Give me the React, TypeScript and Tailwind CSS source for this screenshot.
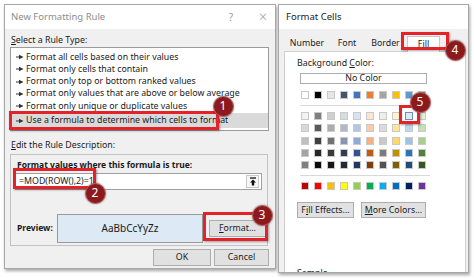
import React from "react";

const theme = ["#FFFFFF", "#000000", "#E7E6E6", "#44546A", "#4472C4", "#ED7D31", "#A5A5A5", "#FFC000", "#5B9BD5", "#70AD47"];
const shades = [
  ["#F2F2F2", "#7F7F7F", "#D0CECE", "#D6DCE4", "#D9E2F3", "#FBE5D5", "#EDEDED", "#FFF2CC", "#DEEBF6", "#E2EFD9"],
  ["#D8D8D8", "#595959", "#AEABAB", "#ADB9CA", "#B4C6E7", "#F7CBAC", "#DBDBDB", "#FEE599", "#BDD7EE", "#C5E0B3"],
  ["#BFBFBF", "#3F3F3F", "#757070", "#8496B0", "#8EAADB", "#F4B183", "#C9C9C9", "#FFD965", "#9DC3E6", "#A8D08D"],
  ["#A5A5A5", "#262626", "#3A3838", "#323F4F", "#2F5496", "#C55A11", "#7B7B7B", "#BF9000", "#2E75B5", "#538135"],
  ["#7F7F7F", "#0C0C0C", "#171616", "#222A35", "#1F3864", "#833C0B", "#525252", "#7F6000", "#1E4E79", "#375623"],
];
const standard = ["#C00000", "#FF0000", "#FFC000", "#FFFF00", "#92D050", "#00B050", "#00B0F0", "#0070C0", "#002060", "#7030A0"];

const rules = [
  "Format all cells based on their values",
  "Format only cells that contain",
  "Format only top or bottom ranked values",
  "Format only values that are above or below average",
  "Format only unique or duplicate values",
];

function Arrow() {
  return (
    <svg width="8" height="6" viewBox="0 0 8 6" className="shrink-0">
      <line x1="0" y1="3" x2="4" y2="3" stroke="#333" strokeWidth="1" />
      <polygon points="3,0.8 7.5,3 3,5.2" fill="#333" />
    </svg>
  );
}

function Badge({ n, x, y }: { n: string; x: number; y: number }) {
  return (
    <div
      className="absolute w-[21px] h-[21px] rounded-full bg-[#8c1a1c] border border-[#b86a6a] flex items-center justify-center text-white text-[12px] leading-none font-['Noto_Sans',sans-serif] shadow-[0_0_2px_rgba(0,0,0,0.4)]"
      style={{ left: x - 10.5, top: y - 10.5 }}
    >
      {n}
    </div>
  );
}

function RedBox({ x, y, w, h }: { x: number; y: number; w: number; h: number }) {
  return (
    <div
      className="absolute border-[3px] border-[#e3222a] shadow-[1px_1px_2px_rgba(0,0,0,0.35)]"
      style={{ left: x, top: y, width: w, height: h }}
    />
  );
}

function Swatch({ c, sel }: { c: string; sel?: boolean }) {
  return (
    <div
      className={
        sel
          ? "w-[8px] h-[8px] border border-[#6d8fb5]"
          : "w-[8px] h-[8px] border border-[#c9c9c9]"
      }
      style={{ backgroundColor: c }}
    />
  );
}

export default function App() {
  return (
    <div className="relative w-[474px] h-[278px] bg-white overflow-hidden font-['Noto_Sans',sans-serif] text-[#1a1a1a]">
      <div className="flex items-start gap-[2px] pt-[4px] pl-[4px]">
        {/* Left dialog */}
        <div className="w-[272px] h-[265px] border border-[#a8a8a8] bg-[#f0f0f0] shadow-[1px_2px_3px_rgba(0,0,0,0.35)] flex flex-col">
          <div className="h-[24px] bg-white flex items-center pl-[6px] pr-[8px] shrink-0">
            <span className="text-[9.5px] text-[#8d8d8d]">New Formatting Rule</span>
            <span className="ml-auto text-[10px] text-[#9a9a9a] mr-[26px]">?</span>
            <span className="text-[14px] leading-none text-[#9a9a9a] font-light">×</span>
          </div>
          <div className="flex flex-col pl-[5px] pr-[5px]">
            <div className="mt-[5px] h-[12px] text-[8.8px] leading-[12px] pl-[1px]">
              <span className="underline">S</span>elect a Rule Type:
            </div>
            <div className="mt-[1px] w-[259px] h-[84px] border border-[#9b9b9b] bg-white pt-[3px] flex flex-col">
              {rules.map((r) => (
                <div key={r} className="h-[12.3px] flex items-center gap-[2px] pl-[5px] text-[8.8px] whitespace-nowrap">
                  <Arrow />
                  <span>{r}</span>
                </div>
              ))}
              <div className="h-[15px] mt-[1px] bg-[#dadada] flex items-center gap-[2px] pl-[5px] text-[8.8px] whitespace-nowrap">
                <Arrow />
                <span>Use a formula to determine which cells to format</span>
              </div>
            </div>
            <div className="mt-[8px] h-[12px] text-[8.8px] leading-[12px] pl-[1px]">
              <span className="underline">E</span>dit the Rule Description:
            </div>
            <div className="mt-[3px] w-[258px] h-[92px] border border-[#c3c3c3] flex flex-col pl-[6px]">
              <div className="mt-[4px] text-[8.5px] leading-[12px] font-bold whitespace-nowrap">
                Format values where this formula is true:
              </div>
              <div className="mt-[2px] ml-[-2px] w-[247px] h-[17px] border border-[#a0a0a0] bg-white flex items-center pl-[3px] pr-[2px]">
                <span className="text-[8.8px]">=MOD(ROW(),2)=1</span>
                <div className="ml-auto w-[13px] h-[13px] border border-[#c8c8c8] bg-[#f7f7f7] flex items-center justify-center">
                  <svg width="8" height="9" viewBox="0 0 8 9">
                    <line x1="1" y1="1" x2="7" y2="1" stroke="#111" strokeWidth="1.3" />
                    <polygon points="4,2.5 7,5.5 5.2,5.5 5.2,8.5 2.8,8.5 2.8,5.5 1,5.5" fill="#111" />
                  </svg>
                </div>
              </div>
              <div className="mt-[24px] flex items-center">
                <span className="w-[40px] text-[8.5px] font-bold">Preview:</span>
                <div className="w-[146px] h-[29px] border border-[#9a9a9a] bg-[#dde9f5] flex items-center justify-center text-[10px]">
                  AaBbCcYyZz
                </div>
                <div className="ml-[6px] w-[57px] h-[17px] border border-[#adadad] bg-[#e1e1e1] flex items-center justify-center text-[8.8px]">
                  <span><span className="underline">F</span>ormat...</span>
                </div>
              </div>
            </div>
            <div className="mt-[3px] flex justify-end gap-[3px] pr-[1px]">
              <div className="w-[58px] h-[17px] border border-[#adadad] bg-[#e1e1e1] flex items-center justify-center text-[8.8px]">OK</div>
              <div className="w-[55px] h-[17px] border border-[#adadad] bg-[#e1e1e1] flex items-center justify-center text-[8.8px]">Cancel</div>
            </div>
          </div>
        </div>

        {/* Right dialog */}
        <div className="w-[191px] h-[269px] border border-[#a8a8a8] bg-[#f0f0f0] shadow-[1px_2px_3px_rgba(0,0,0,0.35)] flex flex-col overflow-hidden">
          <div className="h-[24px] bg-white flex items-center pl-[7px] shrink-0">
            <span className="text-[9.5px] text-[#222]">Format Cells</span>
          </div>
          <div className="flex flex-col pl-[5px] pr-[2px] pt-[6px]">
            <div className="flex items-end h-[16px] text-[8.8px]">
              <div className="w-[46px] h-[15px] flex items-center justify-center">Number</div>
              <div className="w-[34px] h-[15px] flex items-center justify-center">Font</div>
              <div className="w-[43px] h-[15px] flex items-center justify-center">Border</div>
              <div className="w-[33px] h-[16px] bg-white border border-b-0 border-[#c8c8c8] flex items-center justify-center relative top-[1px]">Fill</div>
            </div>
            <div className="h-[230px] bg-white border border-[#d0d0d0] flex flex-col pl-[12px]">
              <div className="mt-[5px] h-[12px] text-[8.8px] leading-[12px]">
                Background <span className="underline">C</span>olor:
              </div>
              <div className="mt-[4px] ml-[3px] w-[127px] h-[11px] border border-[#adadad] bg-white flex items-center justify-center text-[8.8px] leading-none">
                No Color
              </div>
              <div className="mt-[7px] ml-[4px] flex gap-[5px]">
                {theme.map((c) => (
                  <Swatch key={c} c={c} />
                ))}
              </div>
              <div className="mt-[6px] ml-[3px] w-[130px] h-px bg-[#d8d8d8]" />
              <div className="mt-[6px] ml-[4px] flex flex-col gap-[4.3px]">
                {shades.map((row, i) => (
                  <div key={i} className="flex gap-[5px]">
                    {row.map((c, j) => (
                      <Swatch key={c + j} c={c} sel={i === 0 && j === 8} />
                    ))}
                  </div>
                ))}
              </div>
              <div className="mt-[6px] ml-[3px] w-[130px] h-px bg-[#d8d8d8]" />
              <div className="mt-[6px] ml-[4px] flex gap-[5px]">
                {standard.map((c) => (
                  <Swatch key={c} c={c} />
                ))}
              </div>
              <div className="mt-[12px] flex gap-[7px]">
                <div className="w-[57px] h-[16px] border border-[#adadad] bg-[#e1e1e1] flex items-center justify-center text-[8.8px]">
                  <span>F<span className="underline">i</span>ll Effects...</span>
                </div>
                <div className="w-[65px] h-[16px] border border-[#adadad] bg-[#e1e1e1] flex items-center justify-center text-[8.8px]">
                  <span><span className="underline">M</span>ore Colors...</span>
                </div>
              </div>
              <div className="mt-[49px] text-[8.8px] leading-[12px]">Sample</div>
            </div>
          </div>
        </div>
      </div>

      {/* Annotations */}
      <RedBox x={9} y={111} w={210} h={19} />
      <Badge n="1" x={223} y={106} />
      <RedBox x={13} y={168} w={83} h={21} />
      <Badge n="2" x={95} y={193} />
      <RedBox x={203} y={212} w={65} h={29} />
      <Badge n="3" x={262} y={215} />
      <RedBox x={401} y={32} w={48} h={18} />
      <Badge n="4" x={455} y={50} />
      <RedBox x={399} y={105} w={21} h={19} />
      <Badge n="5" x={420} y={102} />
    </div>
  );
}
